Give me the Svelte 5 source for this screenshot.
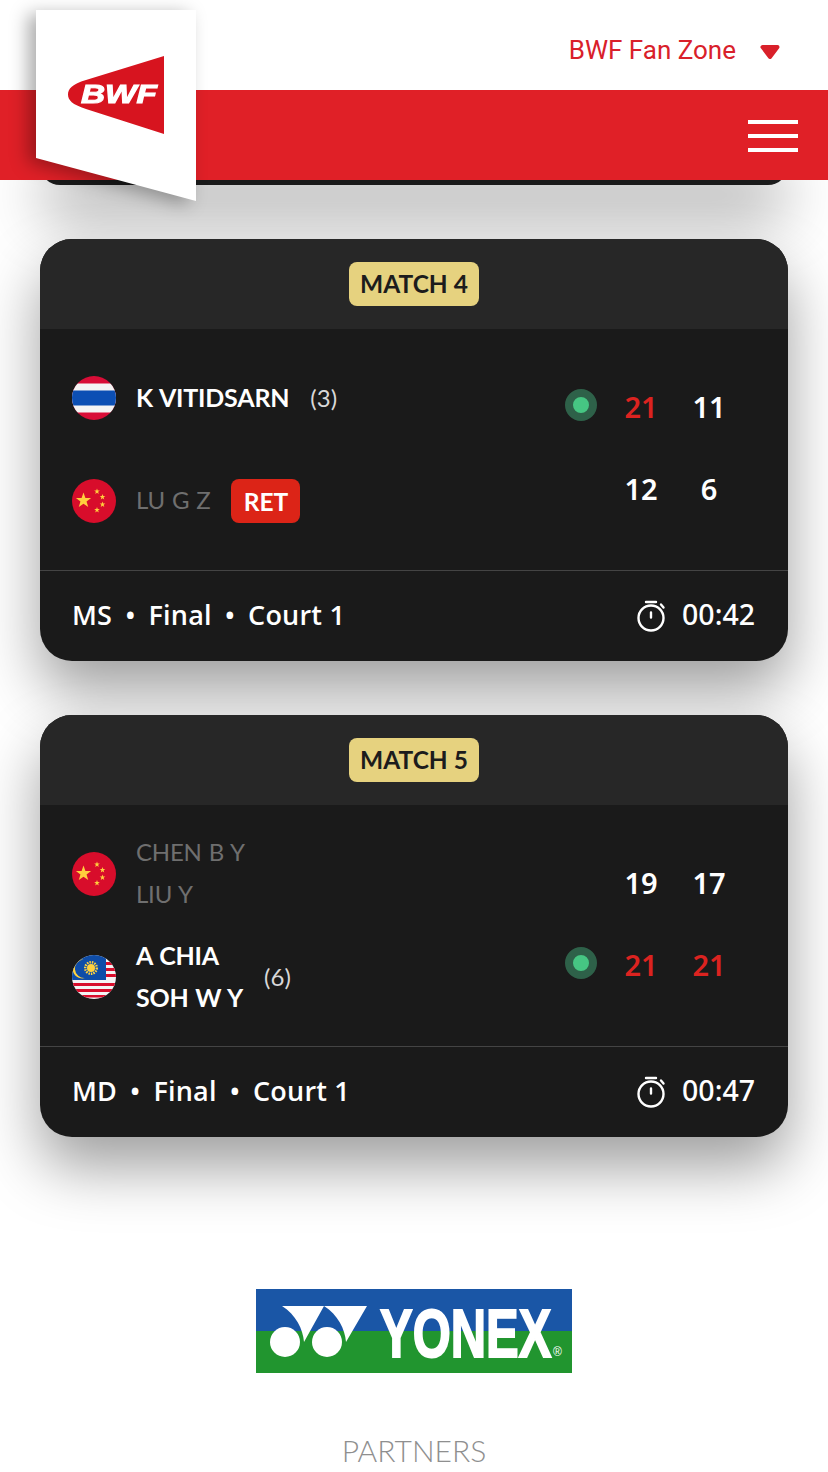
<script>
	const matches = [
		{
			title: 'MATCH 4',
			info: ['MS', 'Final', 'Court 1'],
			time: '00:42',
			players: [
				{ flag: 'th', names: ['K VITIDSARN'], seed: '(3)', won: true },
				{ flag: 'cn', names: ['LU G Z'], ret: true, won: false }
			],
			scores: [
				{ serving: true, games: [{ v: 21, win: true }, { v: 11 }] },
				{ games: [{ v: 12 }, { v: 6 }] }
			]
		},
		{
			title: 'MATCH 5',
			info: ['MD', 'Final', 'Court 1'],
			time: '00:47',
			players: [
				{ flag: 'cn', names: ['CHEN B Y', 'LIU Y'], won: false },
				{ flag: 'my', names: ['A CHIA', 'SOH W Y'], seed: '(6)', won: true }
			],
			scores: [
				{ games: [{ v: 19 }, { v: 17 }] },
				{ serving: true, games: [{ v: 21, win: true }, { v: 21, win: true }] }
			]
		}
	];

	const star = 'M0-10 2.4-3.2 9.5-3.1 3.8 1.2 5.9 8.1 0 4 -5.9 8.1 -3.8 1.2 -9.5-3.1 -2.4-3.2Z';
</script>

{#snippet flag(code)}
	<svg class="flag" viewBox="0 0 44 44">
		<defs>
			<clipPath id="round-{code}"><circle cx="22" cy="22" r="22" /></clipPath>
		</defs>
		<g clip-path="url(#round-{code})">
			{#if code === 'th'}
				<rect width="44" height="44" fill="#d80d37" />
				<rect y="7.500" width="44" height="29" fill="#f4f4f4" />
				<rect y="14.500" width="44" height="15" fill="#0c4fb4" />
			{:else if code === 'cn'}
				<rect width="44" height="44" fill="#d80d2b" />
				<path d={star} fill="#ffcf3d" transform="translate(11.500 21.500) scale(.8)" />
				<path d={star} fill="#ffcf3d" transform="translate(25 12.500) scale(.3)" />
				<path d={star} fill="#ffcf3d" transform="translate(30.500 18) scale(.3)" />
				<path d={star} fill="#ffcf3d" transform="translate(30.500 25.500) scale(.3)" />
				<path d={star} fill="#ffcf3d" transform="translate(25 31) scale(.3)" />
			{:else}
				<rect width="44" height="44" fill="#f4f4f4" />
				<rect x="34" y="7" width="10" height="3" fill="#d80d2b" />
				<rect x="34" y="13" width="10" height="3" fill="#d80d2b" />
				<rect x="34" y="19" width="10" height="3" fill="#d80d2b" />
				<rect y="28" width="44" height="3" fill="#d80d2b" />
				<rect y="34" width="44" height="3" fill="#d80d2b" />
				<rect y="40" width="44" height="2.500" fill="#d80d2b" />
				<rect width="34" height="25" fill="#0f4da8" />
				<path d="M11.500 4.500A9.500 9.500 0 1 0 13 23 8 8 0 1 1 11.500 4.500Z" fill="#ffd23f" />
				<circle cx="19" cy="13" r="4" fill="#ffd23f" />
				<circle cx="19" cy="13" r="5.800" fill="none" stroke="#ffd23f" stroke-width="2.400" stroke-dasharray="1.500 1" />
			{/if}
		</g>
	</svg>
{/snippet}

<div class="page">
	<header class="site-header">
		<div class="top-bar">
			<span class="fan-zone">BWF Fan Zone</span>
			<svg class="caret" viewBox="0 0 20 14"><path d="M2.500 2h15L10 12Z" fill="#d9202a" stroke="#d9202a" stroke-width="4" stroke-linejoin="round" /></svg>
		</div>
		<div class="red-bar">
			<button class="menu" aria-label="Menu"><i></i><i></i><i></i></button>
		</div>
		<div class="logo-shadow">
			<div class="logo-flag">
				<svg class="bwf" viewBox="0 0 96 78">
					<path d="M96 0V78L18 53C4 48.500 0 44 0 38.500 0 33 4 28 18 24Z" fill="#d7141f" />
					<text x="13" y="47" textLength="76" lengthAdjust="spacingAndGlyphs">BWF</text>
				</svg>
			</div>
		</div>
	</header>

	<main class="list">
		<div class="card stub"></div>
		{#each matches as match}
			<section class="card">
				<div class="card-head"><span class="badge">{match.title}</span></div>
				<div class="card-body">
					<div class="players">
						{#each match.players as p}
							<div class="player" class:lost={!p.won}>
								{@render flag(p.flag)}
								<div class="names">
									{#each p.names as n}<div>{n}</div>{/each}
								</div>
								{#if p.seed}<span class="seed">{p.seed}</span>{/if}
								{#if p.ret}<span class="ret">RET</span>{/if}
							</div>
						{/each}
					</div>
					<div class="scores">
						{#each match.scores as row}
							<div class="score-row">
								<span class="dot-slot">
									{#if row.serving}<span class="dot"></span>{/if}
								</span>
								{#each row.games as g}
									<span class="game" class:win={g.win}>{g.v}</span>
								{/each}
							</div>
						{/each}
					</div>
				</div>
				<div class="card-foot">
					<div class="info">
						{#each match.info as part, i}
							{#if i > 0}<span class="sep">•</span>{/if}<span>{part}</span>
						{/each}
					</div>
					<div class="time">
						<svg class="timer" viewBox="0 0 30 32" fill="none" stroke="#fff" stroke-width="2.400">
							<circle cx="15" cy="18" r="12.500" />
							<path d="M10 2h10M25 4.500l2.500 3M15 12.500v5" stroke-linecap="round" />
						</svg>
						<span class="clock">{match.time}</span>
					</div>
				</div>
			</section>
		{/each}
	</main>

	<div class="sponsor">
		<svg class="yonex" viewBox="0 0 316 84">
			<rect width="316" height="42" fill="#1a56a6" />
			<rect y="42" width="316" height="42" fill="#21952f" />
			<path d="M26 17H68L48 53C47 40 40 26 26 17ZM68 17H111L90 53C89 40 82 26 68 17Z" fill="#fff" />
			<circle cx="29" cy="53" r="15" fill="#fff" />
			<circle cx="71" cy="53" r="15" fill="#fff" />
			<text class="yonex-word" transform="translate(124 68) scale(.72 1)">YONEX</text>
			<text class="yonex-r" x="297" y="67">®</text>
		</svg>
	</div>
	<div class="partners">PARTNERS</div>
</div>

<style>
	:global(body) {
		background: #fff;
		overflow-x: hidden;
	}
	.page {
		width: 828px;
		height: 1472px;
		overflow: hidden;
		position: relative;
		font-family: Lato, "Open Sans", sans-serif;
		background: #fff;
	}

	.site-header {
		position: relative;
		z-index: 5;
	}
	.top-bar {
		height: 90px;
		background: #fff;
		display: flex;
		align-items: center;
		justify-content: flex-end;
		padding: 10px 48px 0 0;
		gap: 24px;
		box-sizing: border-box;
	}
	.fan-zone {
		font-family: Roboto, sans-serif;
		font-size: 26px;
		color: #d9202a;
	}
	.caret {
		width: 20px;
		height: 14px;
		margin-top: 4px;
	}
	.red-bar {
		height: 90px;
		background: #e02027;
		display: flex;
		align-items: center;
		justify-content: flex-end;
		padding: 2px 30px 0 0;
		box-sizing: border-box;
	}
	.menu {
		width: 50px;
		height: 32px;
		padding: 0;
		border: 0;
		background: none;
		display: flex;
		flex-direction: column;
		justify-content: space-between;
	}
	.menu i {
		display: block;
		height: 4px;
		background: #fff;
	}

	.logo-shadow {
		position: absolute;
		left: 36px;
		top: 10px;
		filter: drop-shadow(-8px 4px 9px rgba(0, 0, 0, 0.32));
	}
	.logo-flag {
		width: 160px;
		height: 191px;
		background: #fff;
		clip-path: polygon(0 0, 100% 0, 100% 100%, 0 77.500%);
		position: relative;
	}
	.bwf {
		position: absolute;
		left: 32px;
		top: 46px;
		width: 96px;
		height: 78px;
	}
	.bwf text {
		font-family: "Liberation Sans", sans-serif;
		font-weight: 700;
		font-style: italic;
		font-size: 25px;
		fill: #fff;
		stroke: #fff;
		stroke-width: 1px;
	}

	.list {
		display: flex;
		flex-direction: column;
		gap: 54px;
		padding: 0 40px;
		margin-top: -35px;
	}
	.card {
		background: #1a1a1a;
		border-radius: 32px;
		overflow: hidden;
		box-shadow: 0 30px 60px rgba(0, 0, 0, 0.38);
		color: #fff;
	}
	.stub {
		height: 40px;
	}
	.card-head {
		height: 90px;
		background: #272727;
		display: flex;
		align-items: center;
		justify-content: center;
	}
	.badge {
		width: 130px;
		height: 44px;
		border-radius: 8px;
		background: #e6d27f;
		color: #1c1c1c;
		font-size: 24.500px;
		font-weight: 700;
		padding-bottom: 2px;
		box-sizing: border-box;
		display: flex;
		align-items: center;
		justify-content: center;
	}
	.card-body {
		height: 242px;
		box-sizing: border-box;
		display: flex;
		justify-content: space-between;
		border-bottom: 1px solid #444;
	}
	.players {
		padding: 27px 0 0 32px;
		display: flex;
		flex-direction: column;
		gap: 19px;
	}
	.player {
		height: 84px;
		display: flex;
		align-items: center;
	}
	.flag {
		width: 44px;
		height: 44px;
		flex: none;
		margin-right: 20px;
	}
	.names {
		font-size: 25px;
		font-weight: 700;
		line-height: 42px;
		letter-spacing: -0.2px;
		word-spacing: 1px;
		padding-bottom: 2px;
	}
	.lost .names {
		color: #6f6f6f;
		font-size: 24px;
		font-weight: 400;
		word-spacing: 1px;
	}
	.seed {
		font-size: 24px;
		font-weight: 400;
		color: #d8d8d8;
		margin-left: 21px;
		padding-bottom: 2px;
	}
	.ret {
		margin-left: 21px;
		width: 69px;
		height: 44px;
		border-radius: 8px;
		background: #dc2417;
		font-size: 24.500px;
		font-weight: 700;
		display: flex;
		align-items: center;
		justify-content: center;
		color: #fff;
	}
	.scores {
		padding: 37px 45px 0 0;
	}
	.score-row {
		height: 82px;
		display: flex;
		align-items: center;
	}
	.dot-slot {
		width: 32px;
		height: 32px;
		margin: -4px 10px 0 0;
	}
	.dot {
		display: block;
		width: 16px;
		height: 16px;
		border: 8px solid #2e6149;
		border-radius: 50%;
		background: #46c683;
	}
	.game {
		width: 68px;
		text-align: center;
		font-family: "Noto Sans", "Open Sans", sans-serif;
		font-size: 29px;
		font-weight: 600;
		padding-bottom: 2px;
	}
	.game.win {
		color: #dc2320;
	}
	.card-foot {
		height: 90px;
		display: flex;
		align-items: center;
		justify-content: space-between;
		padding: 0 33px 0 32px;
		font-family: "Open Sans", sans-serif;
		font-size: 27px;
		font-weight: 600;
		letter-spacing: 0.2px;
	}
	.info {
		display: flex;
		padding-bottom: 4px;
	}
	.sep {
		margin: 0 13px;
	}
	.time {
		display: flex;
		align-items: center;
		gap: 16px;
		font-family: "Noto Sans", sans-serif;
		font-size: 28.500px;
		font-weight: 500;
		letter-spacing: 0;
	}
	.clock {
		padding-bottom: 4px;
	}
	.timer {
		width: 30px;
		height: 32px;
		margin-top: -1px;
	}

	.sponsor {
		display: flex;
		justify-content: center;
		margin-top: 152px;
	}
	.yonex {
		width: 316px;
		height: 84px;
		display: block;
	}
	.yonex-word {
		font-family: "Liberation Sans", sans-serif;
		font-weight: 700;
		font-size: 68px;
		fill: #fff;
		stroke: #fff;
		stroke-width: 2px;
	}
	.yonex-r {
		font-family: "Liberation Sans", sans-serif;
		font-size: 12px;
		fill: #fff;
	}
	.partners {
		text-align: center;
		margin-top: 59px;
		font-weight: 300;
		font-size: 30px;
		color: #8f8f8f;
		line-height: 36px;
	}
</style>
